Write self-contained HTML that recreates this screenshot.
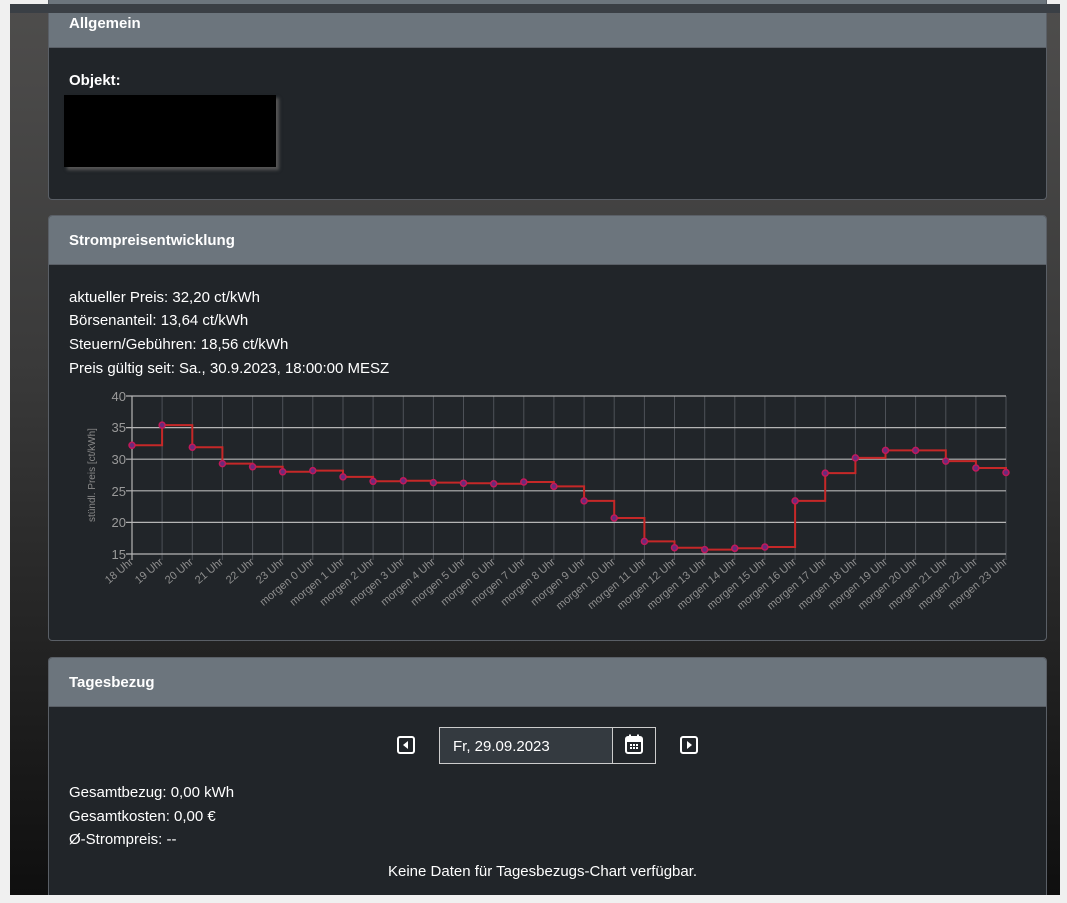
<!DOCTYPE html>
<html style="overflow:hidden;height:903px"><head><meta charset="utf-8"><style>
*{box-sizing:border-box;margin:0;padding:0}
body{width:1067px;height:903px;background:#f0f0f0;position:relative;overflow:hidden;font-family:"Liberation Sans",sans-serif;color:#fff}
.bg{position:absolute;left:10px;top:4px;width:1050px;height:891px;background:linear-gradient(#4e4d4c,#3a3a3a 40%,#0f0f0f)}
.topbar{position:absolute;left:10px;top:4px;width:1050px;height:9px;background:#3a3f45}
.card{position:absolute;left:48px;width:999px;background:#212529;border:1px solid #5a5f66;border-radius:4px;overflow:hidden}
.hd{background:#6c757d;height:49px;padding-left:20px;font-weight:bold;font-size:15px;line-height:50px;border-bottom:1px solid #5a5f66}
.t{position:absolute;font-size:15px;white-space:nowrap}
</style></head><body>
<div class="bg"></div>
<div class="card" style="top:-10px;height:210px;border-top:none;border-radius:0 0 4px 4px">
 <div class="hd" style="height:58px;line-height:68px">Allgemein</div>
</div>
<div class="topbar"></div>
<div class="t" style="left:69px;top:72px;font-weight:bold">Objekt:</div>
<div style="position:absolute;left:64px;top:95px;width:212px;height:72px;background:#000;box-shadow:3px 3px 3px #555"></div>

<div class="card" style="top:215px;height:426px"><div class="hd">Strompreisentwicklung</div></div>
<div class="t" style="left:69px;top:289px">aktueller Preis: 32,20 ct/kWh</div>
<div class="t" style="left:69px;top:312px">Börsenanteil: 13,64 ct/kWh</div>
<div class="t" style="left:69px;top:336px">Steuern/Gebühren: 18,56 ct/kWh</div>
<div class="t" style="left:69px;top:360px">Preis gültig seit: Sa., 30.9.2023, 18:00:00 MESZ</div>

<div class="card" style="top:657px;height:238px;border-bottom:none;border-radius:4px 4px 0 0"><div class="hd">Tagesbezug</div></div>
<svg style="position:absolute;left:397px;top:736px" width="18" height="18" viewBox="0 0 18 18"><rect x="1" y="1" width="16" height="16" rx="2" fill="none" stroke="#fff" stroke-width="2"/><path d="M11 5V13L6 9Z" fill="#fff"/></svg>
<div style="position:absolute;left:439px;top:727px;width:174px;height:37px;background:#343a40;border:1px solid #ccc;font-size:15px;line-height:37px;padding-left:13px">Fr, 29.09.2023</div>
<div style="position:absolute;left:612px;top:727px;width:44px;height:37px;background:#212529;border:1px solid #ccc"></div>
<svg style="position:absolute;left:624px;top:734px" width="20" height="21" viewBox="0 0 20 21"><rect x="2" y="3" width="16" height="16" rx="2" fill="none" stroke="#fff" stroke-width="2"/><rect x="2" y="3" width="16" height="5" fill="#fff"/><rect x="5" y="0.5" width="2" height="4" fill="#fff"/><rect x="13" y="0.5" width="2" height="4" fill="#fff"/><path d="M6 10h2v2H6zM9 10h2v2H9zM12 10h2v2h-2zM6 13h2v2H6zM9 13h2v2H9zM12 13h2v2h-2z" fill="#fff"/></svg>
<svg style="position:absolute;left:680px;top:736px" width="18" height="18" viewBox="0 0 18 18"><rect x="1" y="1" width="16" height="16" rx="2" fill="none" stroke="#fff" stroke-width="2"/><path d="M7 5V13L12 9Z" fill="#fff"/></svg>
<div class="t" style="left:69px;top:784px">Gesamtbezug: 0,00 kWh</div>
<div class="t" style="left:69px;top:808px">Gesamtkosten: 0,00 €</div>
<div class="t" style="left:69px;top:831px">Ø-Strompreis: --</div>
<div class="t" style="left:388px;top:863px">Keine Daten für Tagesbezugs-Chart verfügbar.</div>

<svg style="position:absolute;left:0;top:0" width="1067" height="903" font-family="Liberation Sans, sans-serif">
<g stroke="#4d5157" stroke-width="1">
<path d="M162.1 396V560M192.3 396V560M222.4 396V560M252.6 396V560M282.7 396V560M312.8 396V560M343 396V560M373.1 396V560M403.3 396V560M433.4 396V560M463.5 396V560M493.7 396V560M523.8 396V560M553.9 396V560M584.1 396V560M614.2 396V560M644.4 396V560M674.5 396V560M704.7 396V560M734.8 396V560M764.9 396V560M795.1 396V560M825.2 396V560M855.4 396V560M885.5 396V560M915.6 396V560M945.8 396V560M975.9 396V560M1006 396V560"/>
</g>
<g stroke="#b5b5b5" stroke-width="1.2">
<path d="M126 396H1006M126 427.6H1006M126 459.2H1006M126 490.8H1006M126 522.4H1006M126 554H1006M132 396V560"/>
</g>
<g fill="#9a9a9a" font-size="13" text-anchor="end">
<text x="126" y="401">40</text><text x="126" y="432">35</text><text x="126" y="464">30</text><text x="126" y="496">25</text><text x="126" y="527">20</text><text x="126" y="559">15</text>
</g>
<text transform="translate(95,475) rotate(-90)" fill="#8a8a8a" font-size="10" text-anchor="middle">stündl. Preis [ct/kWh]</text>
<path fill="none" stroke="#c62828" stroke-width="2" d="M132 445.3H162.1V425.1H192.3V447.2H222.4V463.6H252.6V466.8H282.7V471.8H312.8V470.6H343V476.9H373.1V481.3H403.3V480.7H433.4V482.6H463.5V483.2H493.7V483.8H523.8V482H553.9V486.4H584.1V500.9H614.2V518H644.4V541.4H674.5V547.7H704.7V549.6H734.8V548.3H764.9V547H795.1V500.9H825.2V473.1H855.4V457.9H885.5V450.4H915.6V450.4H945.8V461.1H975.9V468H1006V472.5"/>
<g fill="#6a2b7a" stroke="#c2185b" stroke-width="1.5">
<circle cx="132" cy="445.3" r="3"/><circle cx="162.1" cy="425.1" r="3"/><circle cx="192.3" cy="447.2" r="3"/><circle cx="222.4" cy="463.6" r="3"/><circle cx="252.6" cy="466.8" r="3"/><circle cx="282.7" cy="471.8" r="3"/><circle cx="312.8" cy="470.6" r="3"/><circle cx="343" cy="476.9" r="3"/><circle cx="373.1" cy="481.3" r="3"/><circle cx="403.3" cy="480.7" r="3"/><circle cx="433.4" cy="482.6" r="3"/><circle cx="463.5" cy="483.2" r="3"/><circle cx="493.7" cy="483.8" r="3"/><circle cx="523.8" cy="482" r="3"/><circle cx="553.9" cy="486.4" r="3"/><circle cx="584.1" cy="500.9" r="3"/><circle cx="614.2" cy="518" r="3"/><circle cx="644.4" cy="541.4" r="3"/><circle cx="674.5" cy="547.7" r="3"/><circle cx="704.7" cy="549.6" r="3"/><circle cx="734.8" cy="548.3" r="3"/><circle cx="764.9" cy="547" r="3"/><circle cx="795.1" cy="500.9" r="3"/><circle cx="825.2" cy="473.1" r="3"/><circle cx="855.4" cy="457.9" r="3"/><circle cx="885.5" cy="450.4" r="3"/><circle cx="915.6" cy="450.4" r="3"/><circle cx="945.8" cy="461.1" r="3"/><circle cx="975.9" cy="468" r="3"/><circle cx="1006" cy="472.5" r="3"/>
</g>
<g fill="#8f8f8f" font-size="11" text-anchor="end">
<text transform="translate(134,563) rotate(-40)">18 Uhr</text>
<text transform="translate(164,563) rotate(-40)">19 Uhr</text>
<text transform="translate(194,563) rotate(-40)">20 Uhr</text>
<text transform="translate(224,563) rotate(-40)">21 Uhr</text>
<text transform="translate(255,563) rotate(-40)">22 Uhr</text>
<text transform="translate(285,563) rotate(-40)">23 Uhr</text>
<text transform="translate(315,563) rotate(-40)">morgen 0 Uhr</text>
<text transform="translate(345,563) rotate(-40)">morgen 1 Uhr</text>
<text transform="translate(375,563) rotate(-40)">morgen 2 Uhr</text>
<text transform="translate(405,563) rotate(-40)">morgen 3 Uhr</text>
<text transform="translate(436,563) rotate(-40)">morgen 4 Uhr</text>
<text transform="translate(466,563) rotate(-40)">morgen 5 Uhr</text>
<text transform="translate(496,563) rotate(-40)">morgen 6 Uhr</text>
<text transform="translate(526,563) rotate(-40)">morgen 7 Uhr</text>
<text transform="translate(556,563) rotate(-40)">morgen 8 Uhr</text>
<text transform="translate(586,563) rotate(-40)">morgen 9 Uhr</text>
<text transform="translate(616,563) rotate(-40)">morgen 10 Uhr</text>
<text transform="translate(647,563) rotate(-40)">morgen 11 Uhr</text>
<text transform="translate(677,563) rotate(-40)">morgen 12 Uhr</text>
<text transform="translate(707,563) rotate(-40)">morgen 13 Uhr</text>
<text transform="translate(737,563) rotate(-40)">morgen 14 Uhr</text>
<text transform="translate(767,563) rotate(-40)">morgen 15 Uhr</text>
<text transform="translate(797,563) rotate(-40)">morgen 16 Uhr</text>
<text transform="translate(827,563) rotate(-40)">morgen 17 Uhr</text>
<text transform="translate(858,563) rotate(-40)">morgen 18 Uhr</text>
<text transform="translate(888,563) rotate(-40)">morgen 19 Uhr</text>
<text transform="translate(918,563) rotate(-40)">morgen 20 Uhr</text>
<text transform="translate(948,563) rotate(-40)">morgen 21 Uhr</text>
<text transform="translate(978,563) rotate(-40)">morgen 22 Uhr</text>
<text transform="translate(1008,563) rotate(-40)">morgen 23 Uhr</text>
</g>
</svg>
<div style="position:absolute;left:0;top:895px;width:1067px;height:8px;background:#f0f0f0"></div>
</body></html>
